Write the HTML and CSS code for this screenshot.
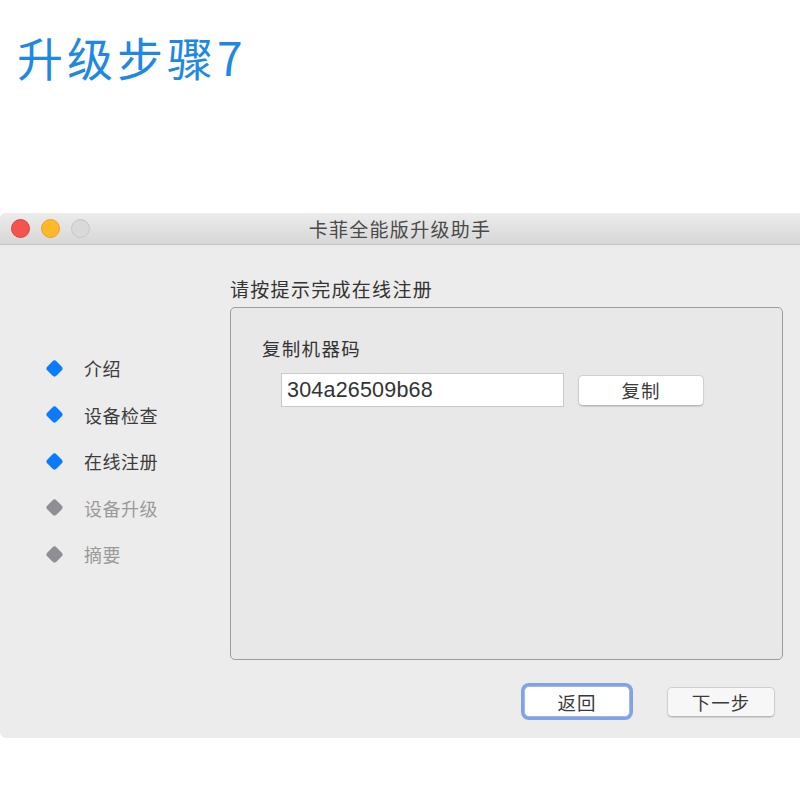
FILE: index.html
```html
<!DOCTYPE html>
<html lang="zh">
<head>
<meta charset="utf-8">
<title>升级步骤7</title>
<link rel="stylesheet" href="styles.css">
</head>
<body>
<h1 class="heading">升级步骤7</h1>
<div class="window">
  <div class="titlebar">
    <div class="lights">
      <span class="light red"></span>
      <span class="light yellow"></span>
      <span class="light gray"></span>
    </div>
    <div class="title">卡菲全能版升级助手</div>
  </div>
  <div class="body">
    <ul class="steps">
      <li class="step done"><span class="dot"></span>介绍</li>
      <li class="step done"><span class="dot"></span>设备检查</li>
      <li class="step done"><span class="dot"></span>在线注册</li>
      <li class="step todo"><span class="dot"></span>设备升级</li>
      <li class="step todo"><span class="dot"></span>摘要</li>
    </ul>
    <div class="content">
      <div class="group-label">请按提示完成在线注册</div>
      <div class="box">
        <div class="box-label">复制机器码</div>
        <div class="row">
          <div class="field">304a26509b68</div>
          <button class="btn copy">复制</button>
        </div>
      </div>
      <div class="actions">
        <button class="btn back">返回</button>
        <button class="btn next">下一步</button>
      </div>
    </div>
  </div>
</div>
</body>
</html>
```

FILE: styles.css
```css
* { box-sizing: border-box; }
html, body { margin: 0; padding: 0; background: #ffffff; }
body {
  width: 800px;
  height: 800px;
  overflow: hidden;
  font-family: "Noto Sans CJK SC", "Noto Sans", sans-serif;
}
.heading {
  margin: 0;
  padding: 28px 0 0 17px;
  height: 213px;
  font-size: 46px;
  line-height: 56px;
  font-weight: 400;
  color: #1e88e2;
  letter-spacing: 4px;
}
.window {
  width: 800px;
  height: 525px;
  background: #ececec;
  border-radius: 6px 0 0 6px;
  display: flex;
  flex-direction: column;
  overflow: hidden;
}
.titlebar {
  height: 32px;
  flex: none;
  background: linear-gradient(#ececec, #d7d7d7);
  border-bottom: 1px solid #c4c4c4;
  display: flex;
  align-items: center;
  position: relative;
}
.lights {
  display: flex;
  gap: 11px;
  padding-left: 11px;
}
.light {
  width: 19px;
  height: 19px;
  border-radius: 50%;
  display: block;
}
.red { background: #f4544f; border: 1px solid #e0403b; }
.yellow { background: #fdb92a; border: 1px solid #e6a31e; }
.gray { background: #d9d9d9; border: 1px solid #c6c6c6; }
.title {
  position: absolute;
  left: 0;
  right: 0;
  text-align: center;
  font-size: 19px;
  letter-spacing: 1.3px;
  color: #4a4a4a;
}
.body {
  flex: 1;
  display: flex;
}
.steps {
  list-style: none;
  margin: 0;
  padding: 100px 0 0 0;
  width: 230px;
  flex: none;
}
.step {
  height: 46.5px;
  display: flex;
  align-items: center;
  font-size: 18px;
  letter-spacing: 0.5px;
  padding-left: 48px;
}
.dot {
  width: 13px;
  height: 13px;
  border-radius: 3px;
  transform: rotate(45deg);
  margin-right: 23px;
  flex: none;
}
.done { color: #3c3c3c; }
.done .dot { background: #0a7bff; }
.todo { color: #9a9a9a; }
.todo .dot { background: #8e8e94; }
.content {
  flex: 1;
  padding: 33px 17px 0 0;
  display: flex;
  flex-direction: column;
}
.group-label {
  font-size: 19px;
  letter-spacing: 1.3px;
  line-height: 22px;
  color: #333;
  height: 29px;
}
.box {
  height: 353px;
  border: 1.5px solid #9c9c9c;
  border-radius: 5px;
  background: #e8e8e8;
  padding: 28px 0 0 31px;
}
.box-label {
  font-size: 18.5px;
  letter-spacing: 1.3px;
  line-height: 24px;
  color: #333;
}
.row {
  display: flex;
  align-items: center;
  gap: 14px;
  margin: 13px 0 0 19px;
}
.field {
  width: 283px;
  height: 34px;
  background: #fff;
  border: 1px solid #c9c9c9;
  font-family: "Liberation Sans", "Noto Sans", sans-serif;
  font-size: 21.5px;
  letter-spacing: 0.2px;
  line-height: 33px;
  color: #333;
  padding-left: 5px;
}
.btn {
  font-family: "Noto Sans CJK SC", "Noto Sans", sans-serif;
  font-size: 18.5px;
  letter-spacing: 1px;
  color: #3a3a3a;
  background: #fff;
  border: 1px solid #cfcfcf;
  border-bottom-color: #b8b8b8;
  border-radius: 5px;
  padding: 0;
  box-shadow: 0 1px 1px rgba(0,0,0,0.12);
}
.copy {
  width: 126px;
  height: 31px;
}
.actions {
  display: flex;
  justify-content: flex-end;
  align-items: center;
  gap: 37px;
  margin-top: 26px;
  padding-right: 8px;
}
.back {
  width: 106px;
  height: 31px;
  border-color: #9fb8e6;
  box-shadow: 0 0 0 3px #7fa3e6;
}
.next {
  width: 108px;
  height: 30px;
  background: #f7f7f7;
}
```
